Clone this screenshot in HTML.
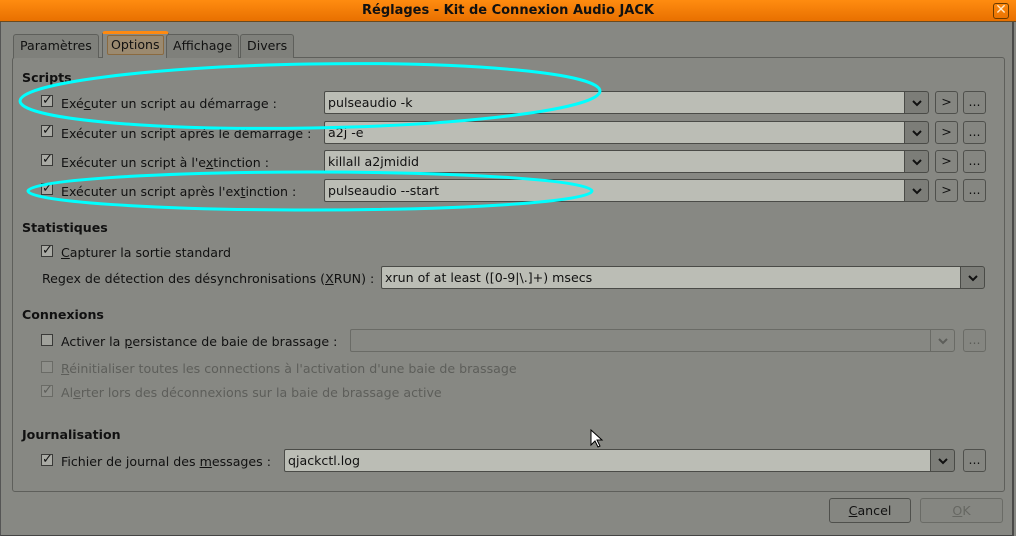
<!DOCTYPE html>
<html><head><meta charset="utf-8"><style>
*{box-sizing:border-box;margin:0;padding:0}
body{width:1016px;height:536px;background:#878883;font-family:"DejaVu Sans","Liberation Sans",sans-serif;font-size:12.6px;color:#111;position:relative;overflow:hidden}
.a{position:absolute;white-space:nowrap}
.title{left:0;top:0;width:1016px;height:22px;background:linear-gradient(#ff8c10,#e87000);border-bottom:1px solid #6a4a20;text-align:center;font-weight:bold;line-height:22px;font-size:13px}
.win{left:0;top:22px;width:1014px;height:514px;border-right:2px solid #4a4a48;border-left:1px solid #555;border-bottom:1px solid #444}
.frame{left:12px;top:57px;width:993px;height:435px;border:1px solid #5e5f5b;border-radius:3px}
.tab{top:34px;height:24px;border:1px solid #5e5f5b;border-bottom:none;border-radius:3px 3px 0 0;background:#7f807b;line-height:22px;padding:0 6px}
.cb{width:12px;height:12px;border:1px solid #3a3a38;background:#a9aaa4;font-size:13px;line-height:10px;text-align:center;font-weight:bold}
.dis{color:#5d5e5a}
.cb.dis{border-color:#6a6b66;background:#8e8f8a;color:#5d5e5a}
.in{height:23px;background:#bbbdb5;border:1px solid #4a4b47;border-radius:2px;line-height:21px;padding-left:3px}
.dd{height:23px;width:25px;border:1px solid #4a4b47;border-radius:0 3px 3px 0;background:#7c7d78}
.dd svg{position:absolute;left:7px;top:8px}
.btn{height:23px;border:1px solid #4f504c;border-radius:3px;background:#858681;text-align:center;line-height:19px}
.h{font-weight:bold}
.t{margin-top:2px}
u{text-decoration:underline}
</style></head><body>
<div class="a win"></div>
<div class="a title">Réglages - Kit de Connexion Audio JACK</div>
<div class="a" style="left:993px;top:3px;width:16px;height:16px;border:1px solid #6a3a00;border-radius:3px;color:#ffe8c8;font-weight:bold;font-size:14px;line-height:13px;text-align:center">✕</div>

<div class="a frame"></div>
<div class="a tab" style="left:13px">Paramètres</div>
<div class="a tab" style="left:102px;top:31px;height:27px;border-top:3px solid #ff8a10;background:#878883;padding:0 4px"><span style="display:inline-block;border:1px solid #8a6a40;background:#9b8a70;border-radius:2px;padding:0 3px;line-height:18px;margin-top:1px">Options</span></div>
<div class="a tab" style="left:166px">Affichage</div>
<div class="a tab" style="left:240px">Divers</div>

<div class="a h" style="left:22px;top:70px">Scripts</div>

<div class="a cb" style="left:41px;top:95px">✓</div><div class="a" style="left:61px;top:96px">Exé<u>c</u>uter un script au démarrage :</div>
<div class="a in" style="left:324px;top:91px;width:582px">pulseaudio -k</div><div class="a dd" style="left:904px;top:91px"><svg width="10" height="7"><path d="M1 1l4 4 4-4" fill="none" stroke="#111" stroke-width="2"/></svg></div>
<div class="a btn" style="left:935px;top:91px;width:23px">&gt;</div><div class="a btn" style="left:963px;top:91px;width:23px">...</div>

<div class="a cb" style="left:41px;top:125px">✓</div><div class="a" style="left:61px;top:126px">Exécuter un script après le démarrage :</div>
<div class="a in" style="left:324px;top:121px;width:582px">a2j -e</div><div class="a dd" style="left:904px;top:121px"><svg width="10" height="7"><path d="M1 1l4 4 4-4" fill="none" stroke="#111" stroke-width="2"/></svg></div>
<div class="a btn" style="left:935px;top:121px;width:23px">&gt;</div><div class="a btn" style="left:963px;top:121px;width:23px">...</div>

<div class="a cb" style="left:41px;top:154px">✓</div><div class="a" style="left:61px;top:155px">Exécuter un script à l'e<u>x</u>tinction :</div>
<div class="a in" style="left:324px;top:150px;width:582px">killall a2jmidid</div><div class="a dd" style="left:904px;top:150px"><svg width="10" height="7"><path d="M1 1l4 4 4-4" fill="none" stroke="#111" stroke-width="2"/></svg></div>
<div class="a btn" style="left:935px;top:150px;width:23px">&gt;</div><div class="a btn" style="left:963px;top:150px;width:23px">...</div>

<div class="a cb" style="left:41px;top:183px">✓</div><div class="a" style="left:61px;top:184px">Exécuter un script après l'ex<u>t</u>inction :</div>
<div class="a in" style="left:324px;top:179px;width:582px">pulseaudio --start</div><div class="a dd" style="left:904px;top:179px"><svg width="10" height="7"><path d="M1 1l4 4 4-4" fill="none" stroke="#111" stroke-width="2"/></svg></div>
<div class="a btn" style="left:935px;top:179px;width:23px">&gt;</div><div class="a btn" style="left:963px;top:179px;width:23px">...</div>

<div class="a h" style="left:22px;top:220px">Statistiques</div>
<div class="a cb" style="left:41px;top:245px">✓</div><div class="a" style="left:61px;top:245px"><u>C</u>apturer la sortie standard</div>
<div class="a" style="left:42px;top:271px">Regex de détection des désynchronisations (<u>X</u>RUN) :</div>
<div class="a in" style="left:381px;top:266px;width:581px">xrun of at least ([0-9|\.]+) msecs</div><div class="a dd" style="left:960px;top:266px"><svg width="10" height="7"><path d="M1 1l4 4 4-4" fill="none" stroke="#111" stroke-width="2"/></svg></div>

<div class="a h" style="left:22px;top:307px">Connexions</div>
<div class="a cb" style="left:41px;top:334px;background:#a0a19b"></div><div class="a" style="left:61px;top:334px">Activer la <u>p</u>ersistance de baie de brassage :</div>
<div class="a in" style="left:350px;top:329px;width:582px;background:#878883;border-color:#6a6b66"></div><div class="a dd" style="left:930px;top:329px;background:#878883;border-color:#6a6b66"><svg width="10" height="7"><path d="M1 1l4 4 4-4" fill="none" stroke="#5d5e5a" stroke-width="2"/></svg></div>
<div class="a btn" style="left:963px;top:329px;width:23px;border-color:#6a6b66;color:#5d5e5a">...</div>
<div class="a cb dis" style="left:41px;top:361px"></div><div class="a dis" style="left:61px;top:361px"><u>R</u>éinitialiser toutes les connections à l'activation d'une baie de brassage</div>
<div class="a cb dis" style="left:41px;top:385px">✓</div><div class="a dis" style="left:61px;top:385px">Al<u>e</u>rter lors des déconnexions sur la baie de brassage active</div>

<div class="a h" style="left:22px;top:427px">Journalisation</div>
<div class="a cb" style="left:41px;top:454px">✓</div><div class="a" style="left:61px;top:454px">Fichier de journal des <u>m</u>essages :</div>
<div class="a in" style="left:284px;top:449px;width:648px">qjackctl.log</div><div class="a dd" style="left:930px;top:449px"><svg width="10" height="7"><path d="M1 1l4 4 4-4" fill="none" stroke="#111" stroke-width="2"/></svg></div>
<div class="a btn" style="left:963px;top:449px;width:23px">...</div>

<div class="a btn" style="left:829px;top:498px;width:82px;height:25px;line-height:23px"><u>C</u>ancel</div>
<div class="a btn" style="left:920px;top:498px;width:83px;height:25px;line-height:23px;border-color:#6a6b66;color:#666762"><u>O</u>K</div>

<svg class="a" style="left:0;top:0" width="1016" height="536">
<ellipse cx="310" cy="96" rx="290" ry="32" fill="none" stroke="#00ffff" stroke-width="3" transform="rotate(-1 310 96)"/>
<ellipse cx="310" cy="191" rx="282" ry="19" fill="none" stroke="#00ffff" stroke-width="3"/>
<path d="M591 430 v15 l4-4 3 6 2-1 -3-6 h5 z" fill="#fff" stroke="#000" stroke-width="1"/>
</svg>
</body></html>
